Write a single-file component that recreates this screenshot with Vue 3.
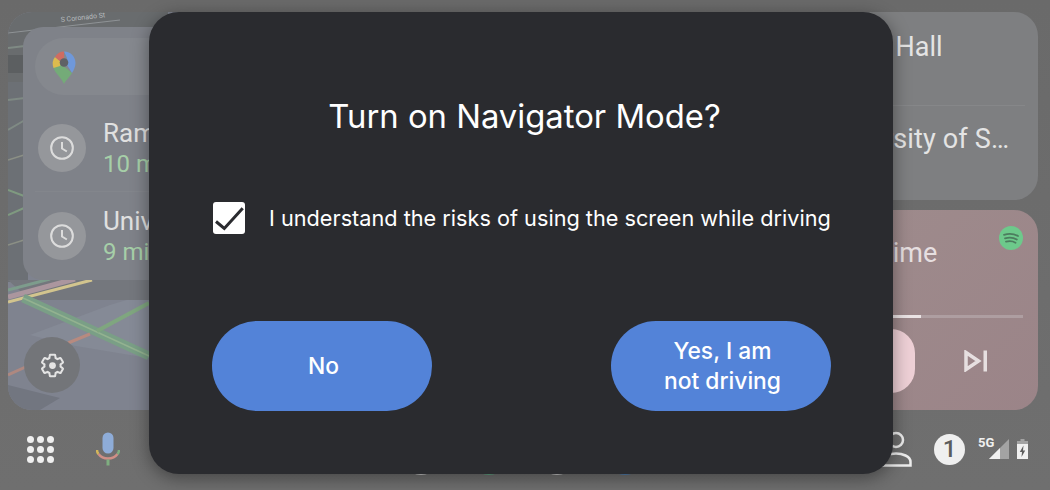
<script setup>
const routes = [
  { title: 'Ramsey Hall', sub: '10 min' },
  { title: 'University', sub: '9 min' }
]
const destinations = ['Mudd Hall', 'University of S…']
const dots = Array.from({ length: 9 }, (_, i) => i)
const apps = ['#c9c9c9', '#5fa582', '#c9c9c9', '#4f80b5']
</script>

<template>
  <div class="page">
    <main class="cards">
      <section class="map-card">
        <svg class="map" viewBox="8 12 552 398" width="552" height="398" aria-hidden="true">
          <rect x="8" y="12" width="552" height="398" fill="#7f838f" />
          <rect x="8" y="12" width="160" height="70" fill="#696c6e" />
          <rect x="8" y="55" width="20" height="18" fill="#5c5f61" />
          <rect x="8" y="82" width="20" height="200" fill="#6c7075" />
          <path d="M8 385 L60 398 L40 410 L8 410Z" fill="#727680" />
          <path d="M30 335 L110 305 L160 290 L160 360 L70 345Z" fill="#858a96" />
          <path d="M8 280 H160 V300 L30 300Z" fill="#74777d" />
          <path d="M8 302 L92 280" stroke="#d2c48e" stroke-width="3" />
          <path d="M8 297 L75 279" stroke="#ab969e" stroke-width="5" />
          <path d="M8 290 L50 279" stroke="#7d9c8c" stroke-width="3" />
          <path d="M23 298 L149 356" stroke="#7a9f86" stroke-width="9" />
          <path d="M23 298 L149 356" stroke="#93b290" stroke-width="1.500" />
          <path d="M149 303 L97 331" stroke="#7fa67f" stroke-width="4" />
          <path d="M90 334 L68 343" stroke="#b78a7f" stroke-width="3" />
          <path d="M30 365 L8 375" stroke="#ae8880" stroke-width="3" />
          <path d="M8 33 L120 20" stroke="#8f9396" stroke-width="1" />
          <path d="M8 48 L25 46 M8 100 L25 98 M8 130 L25 120" stroke="#7f8a84" stroke-width="2" />
          <path d="M8 160 L24 155 M8 245 L24 240" stroke="#8b8f85" stroke-width="1.500" />
          <path d="M8 190 L24 196 M8 215 L24 208" stroke="#7f9a80" stroke-width="2" />
          <text x="61" y="22" fill="#b8bcbf" font-size="7" font-family="Roboto, sans-serif" transform="rotate(-6 61 22)">S Coronado St</text>
        </svg>

        <div class="panel">
          <div class="search">
            <svg class="pin" viewBox="0 0 24 33" width="24" height="33" aria-hidden="true">
              <path d="M12 33 C9 26 3 22 1.500 17 L8 13 L14 17 L20 22 C17 27 14 29 12 33Z" fill="#74ab78" />
              <path d="M1.500 17 C0 13 0.400 9 3 6 L9 11 L8 15Z" fill="#dcbb4e" />
              <path d="M3 6 C5 2.500 8 0.500 12 0.500 L12 7 L8 10Z" fill="#cf6c62" />
              <path d="M12 0.500 C19 0.500 23.500 6 23.500 12 C23.500 15 22 19 20 22 L15 14 L15 7Z" fill="#6f98da" />
              <circle cx="12" cy="11.500" r="4.300" fill="#5f6166" />
            </svg>
          </div>
          <div v-for="r in routes" :key="r.title" class="route">
            <span class="clock">
              <svg viewBox="0 0 24 24" width="26" height="26" aria-hidden="true">
                <circle cx="12" cy="12" r="10" fill="none" stroke="#dcdcdc" stroke-width="1.900" />
                <path d="M12 6.500 V12.500 L16.500 15.200" fill="none" stroke="#dcdcdc" stroke-width="1.800" />
              </svg>
            </span>
            <div class="route-text">
              <div class="title">{{ r.title }}</div>
              <div class="sub">{{ r.sub }}</div>
            </div>
          </div>
        </div>

        <button class="settings" aria-label="Settings">
          <svg viewBox="0 0 24 24" width="27" height="27" aria-hidden="true">
            <path d="M19.140 12.940c.04-.3.06-.61.06-.94 0-.32-.02-.64-.07-.94l2.030-1.580c.18-.14.23-.41.12-.61l-1.920-3.320c-.12-.22-.37-.29-.59-.22l-2.390.96c-.5-.38-1.030-.7-1.620-.94l-.36-2.540c-.04-.24-.24-.41-.48-.41h-3.840c-.24 0-.43.17-.47.41l-.36 2.540c-.59.24-1.130.57-1.620.94l-2.390-.96c-.22-.08-.47 0-.59.22L2.740 8.870c-.12.21-.08.47.12.61l2.030 1.580c-.05.3-.09.63-.09.94s.02.64.07.94l-2.030 1.580c-.18.14-.23.41-.12.61l1.920 3.320c.12.22.37.29.59.22l2.390-.96c.5.38 1.030.7 1.620.94l.36 2.540c.05.24.24.41.48.41h3.840c.24 0 .44-.17.47-.41l.36-2.540c.59-.24 1.130-.56 1.620-.94l2.390.96c.22.08.47 0 .59-.22l1.920-3.320c.12-.22.07-.47-.12-.61l-2.010-1.580z" fill="none" stroke="#e4e4e4" stroke-width="1.800" />
            <circle cx="12" cy="12" r="3" fill="#e4e4e4" />
          </svg>
        </button>
      </section>

      <aside class="side">
        <section class="dest-card">
          <div v-for="d in destinations" :key="d" class="dest">
            <div class="dest-title">{{ d }}</div>
          </div>
        </section>
        <section class="music-card">
          <div class="music-title">Sometime</div>
          <svg class="spotify" viewBox="0 0 24 24" width="24" height="24" aria-hidden="true">
            <circle cx="12" cy="12" r="12" fill="#6dc98b" />
            <path d="M5 8.800 C9.500 7.300 15 7.700 19 10 M6 12.300 C10 11.200 14.500 11.500 17.800 13.500 M7 15.600 C10.500 14.800 13.800 15 16.500 16.700" fill="none" stroke="#4c7d5f" stroke-width="1.800" stroke-linecap="round" />
          </svg>
          <div class="progress"><span class="progress-fill"></span></div>
          <div class="controls">
            <span class="pause"></span>
            <svg viewBox="0 0 24 22" width="24" height="22" aria-hidden="true">
              <path d="M2 2.500 L14.500 11 L2 19.500Z" fill="none" stroke="#e6dfe0" stroke-width="3.500" />
              <rect x="19.500" y="0.500" width="3.500" height="21" fill="#e6dfe0" />
            </svg>
          </div>
        </section>
      </aside>
    </main>

    <footer class="bar">
      <div class="bar-left">
        <div class="dots">
          <span v-for="d in dots" :key="d" class="dot"></span>
        </div>
        <svg class="mic" viewBox="0 0 24 34" width="24" height="34" aria-hidden="true">
          <rect x="6.500" y="0.500" width="11" height="21" rx="5.500" fill="#8eacd8" />
          <path d="M1 18 C1 20 1.500 21 2.500 22" fill="none" stroke="#d4b65a" stroke-width="2.500" />
          <path d="M2.500 22 C5 25.500 8.500 26.500 12 26.500 C15.500 26.500 19 25.500 21.500 22" fill="none" stroke="#cf8f86" stroke-width="2.500" />
          <path d="M21.500 22 C22.500 21 23 20 23 18" fill="none" stroke="#7fae80" stroke-width="2.500" />
          <rect x="10.500" y="27.500" width="3" height="6" fill="#7fae80" />
        </svg>
      </div>
      <div class="apps">
        <span v-for="(c, i) in apps" :key="i" class="app" :style="{ background: c }"></span>
      </div>
      <div class="status">
        <svg viewBox="0 0 32 36" width="32" height="36" aria-hidden="true">
          <circle cx="16" cy="9" r="7" fill="none" stroke="#ededed" stroke-width="2.500" />
          <path d="M1.500 34.500 V31 C1.500 25 10 22.500 16 22.500 C22 22.500 30.500 25 30.500 31 V34.500Z" fill="none" stroke="#ededed" stroke-width="2.500" />
        </svg>
        <span class="badge">1</span>
        <div class="net">
          <span class="five-g">5G</span>
          <svg class="signal" viewBox="0 0 20 20" width="20" height="20" aria-hidden="true">
            <path d="M0 20 L20 0 V20Z" fill="#a3a3a3" />
            <path d="M0 20 L11 9 V20Z" fill="#f0f0f0" />
          </svg>
        </div>
        <svg class="battery" viewBox="0 0 11 20" width="11" height="20" aria-hidden="true">
          <path d="M3.500 0 H7.500 V2 H11 V20 H0 V2 H3.500Z" fill="#a3a3a3" />
          <rect y="5" width="11" height="15" fill="#f0f0f0" />
          <path d="M6.500 6.500 L2.800 13 H5 L4.500 18 L8.200 11.500 H6Z" fill="#5c5c5c" />
        </svg>
      </div>
    </footer>

    <div class="dialog" role="dialog">
      <h1 class="dialog-title">Turn on Navigator Mode?</h1>
      <label class="consent">
        <span class="check">
          <svg viewBox="0 0 32 32" width="32" height="32" aria-hidden="true">
            <path d="M3 19.500 L11.300 26.500 L29.700 6.300" fill="none" stroke="#2a2b2f" stroke-width="3" />
          </svg>
        </span>
        <span class="consent-text">I understand the risks of using the screen while driving</span>
      </label>
      <div class="actions">
        <button class="action">No</button>
        <button class="action">Yes, I am<br />not driving</button>
      </div>
    </div>
  </div>
</template>

<style>
html, body { margin: 0; background: #6e6e6e; overflow: hidden; }
</style>

<style scoped>
.page {
  position: relative;
  width: 1050px;
  height: 490px;
  overflow: hidden;
  background: linear-gradient(#6a6a6a, #6f6f6f);
  font-family: Roboto, "Liberation Sans", sans-serif;
  box-sizing: border-box;
}
.cards {
  display: flex;
  gap: 10px;
  height: 398px;
  padding: 12px 12px 0 8px;
}
.map-card {
  position: relative;
  width: 552px;
  height: 398px;
  border-radius: 24px;
  overflow: hidden;
  flex: none;
}
.map { position: absolute; inset: 0; display: block; }
.panel {
  position: absolute;
  left: 15px;
  top: 15px;
  width: 500px;
  height: 253px;
  background: #7f8289;
  border-radius: 20px;
  padding: 11px 12px 0;
  box-sizing: border-box;
}
.search {
  height: 57px;
  border-radius: 29px;
  background: #85888e;
  display: flex;
  align-items: center;
  padding-left: 17px;
  margin-bottom: 10px;
}
.pin { margin-top: 2px; }
.route {
  height: 87px;
  display: flex;
  align-items: center;
  gap: 17px;
  padding-left: 3px;
  border-bottom: 1px solid #83868c;
  box-sizing: border-box;
}
.route:last-child { border-bottom: 0; }
.clock {
  width: 48px;
  height: 48px;
  border-radius: 50%;
  background: #95979b;
  display: flex;
  align-items: center;
  justify-content: center;
  flex: none;
}
.route-text { white-space: nowrap; }
.title { font-size: 26px; line-height: 32px; color: #e0e0e0; }
.sub { font-size: 24px; line-height: 30px; color: #a6cfa8; }
.settings {
  position: absolute;
  left: 16px;
  top: 325px;
  width: 56px;
  height: 56px;
  border: 0;
  padding: 0;
  border-radius: 50%;
  background: #737579;
  display: flex;
  align-items: center;
  justify-content: center;
}
.side {
  flex: 1;
  display: flex;
  flex-direction: column;
  gap: 10px;
  min-width: 0;
}
.dest-card {
  height: 188px;
  border-radius: 24px;
  background: #7e7f81;
  padding: 0 13px 0 0;
  flex: none;
}
.dest {
  height: 94px;
  padding: 18px 0 0 250px;
  box-sizing: border-box;
  border-bottom: 1px solid #868789;
}
.dest:last-child {
  border-bottom: 0;
  padding: 16px 0 0 247px;
  letter-spacing: 0.15px;
}
.dest-title {
  font-size: 27px;
  line-height: 34px;
  color: #e4e4e4;
  white-space: nowrap;
}
.music-card {
  position: relative;
  flex: 1;
  border-radius: 24px;
  overflow: hidden;
  background:
    radial-gradient(circle at 20% 20%, #a89b9c 0%, transparent 55%),
    linear-gradient(135deg, #a0908f, #9b8488);
  padding: 26px 15px 0 0;
}
.music-title {
  font-size: 27px;
  line-height: 34px;
  color: #e6dfe0;
  padding-left: 244.500px;
}
.spotify { position: absolute; right: 15px; top: 16px; }
.progress {
  position: relative;
  margin: 45px 0 0 100px;
  height: 3px;
  background: #ae9ea1;
}
.progress-fill {
  display: block;
  height: 100%;
  width: 251px;
  background: #ebe4e5;
}
.controls {
  display: flex;
  align-items: center;
  justify-content: flex-end;
  gap: 49px;
  margin-top: 11px;
  padding-right: 35px;
}
.pause {
  width: 130px;
  height: 64px;
  border-radius: 24px;
  background: #eed0d6;
}
.bar {
  display: grid;
  grid-template-columns: 399px 248px 1fr;
  height: 80px;
}
.bar-left {
  display: flex;
  align-items: center;
  gap: 42px;
  padding-left: 27px;
  height: 78px;
}
.dots {
  display: grid;
  grid-template-columns: repeat(3, 7px);
  gap: 3px;
}
.dot { width: 7px; height: 7px; border-radius: 50%; background: #efefef; }
.apps { display: flex; gap: 24px; padding-top: 21px; }
.app { width: 44px; height: 44px; border-radius: 50%; flex: none; }
.status {
  display: flex;
  align-items: center;
  gap: 7px;
  padding-left: 233px;
  height: 78px;
}
.badge {
  width: 31px;
  height: 31px;
  border-radius: 50%;
  background: #efefef;
  color: #5c5c5c;
  font-size: 24px;
  font-weight: 500;
  line-height: 31px;
  text-align: center;
  margin-left: 15px;
  margin-right: 5px;
  flex: none;
}
.net { position: relative; width: 32px; height: 20px; margin-right: 1px; }
.five-g {
  position: absolute;
  left: 1px;
  top: -2px;
  font-size: 13px;
  font-weight: 700;
  line-height: 12px;
  color: #f0f0f0;
}
.signal { position: absolute; left: 12px; top: 0; }
.dialog {
  position: absolute;
  left: 149px;
  top: 12px;
  width: 744px;
  height: 462px;
  box-sizing: border-box;
  padding: 84px 62px 63px 63px;
  border-radius: 30px;
  background: #2a2b2f;
  box-shadow: 0 4px 18px rgba(0, 0, 0, 0.4);
  display: flex;
  flex-direction: column;
  color: #fff;
  font-family: Inter, Roboto, sans-serif;
}
.dialog-title {
  margin: 0;
  padding-left: 6px;
  font-size: 32.800px;
  line-height: 40px;
  font-weight: 400;
  text-align: center;
}
.consent {
  display: flex;
  align-items: center;
  gap: 24px;
  margin-top: 66px;
  padding-left: 1px;
  font-size: 21.700px;
  line-height: 32px;
  white-space: nowrap;
}
.check {
  width: 32px;
  height: 32px;
  border-radius: 3px;
  background: #fff;
  flex: none;
}
.check svg { display: block; }
.actions {
  display: flex;
  justify-content: space-between;
  margin-top: auto;
}
.action {
  width: 220px;
  height: 90px;
  border: 0;
  border-radius: 45px;
  background: #5383d8;
  color: #fff;
  font-family: inherit;
  font-size: 22.800px;
  font-weight: 500;
  line-height: 30px;
  padding: 0 0 0 3px;
}
</style>
